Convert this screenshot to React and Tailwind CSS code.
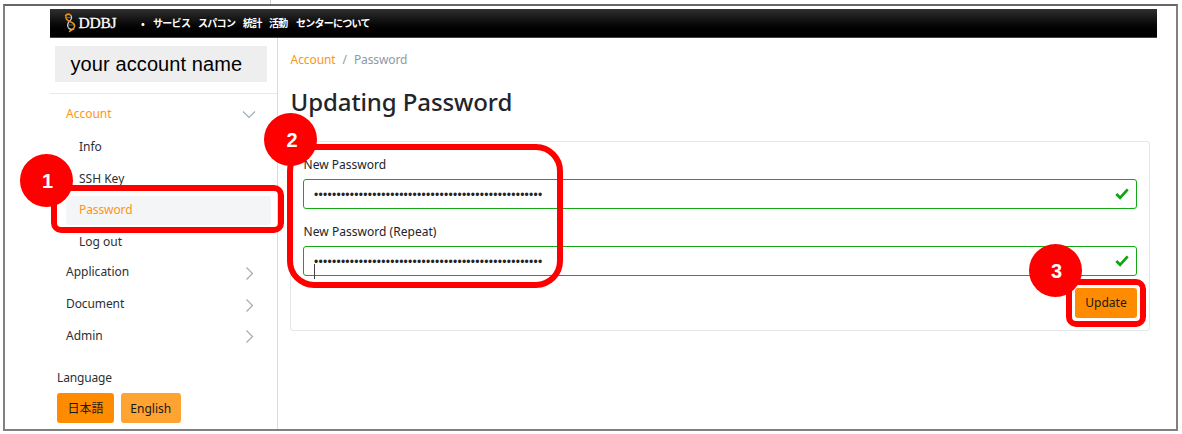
import React from "react";

function Chevron({ down }) {
  return (
    <svg className="h-[14px] w-[14px] shrink-0" viewBox="0 0 14 14" fill="none" stroke="#a3abb5" strokeWidth="1.2">
      <path d={down ? "M1 3.5 L7 9.5 L13 3.5" : "M4.5 0.5 L10.5 6.5 L4.5 12.5"} />
    </svg>
  );
}

function Group({ label, open, tracking }) {
  return (
    <div className="flex h-[31.6px] items-center justify-between pr-[21px] pl-4">
      <span className={`${open ? "text-[#ff9317]" : "text-[#2b3035]"} ${tracking}`}>{label}</span>
      <span className="flex pt-[3px]"><Chevron down={open} /></span>
    </div>
  );
}

function Item({ label, active, tracking }) {
  return (
    <div className="flex h-[31.6px] items-center pr-[6px] pl-4">
      <div className={`flex h-[29px] w-full items-center rounded-[3px] pl-[13px] ${active ? "bg-[#f4f5f7] text-[#ff9317]" : "text-[#2b3035]"}`}>
        <span className={tracking}>{label}</span>
      </div>
    </div>
  );
}

function Field({ label, caret, tracking }) {
  return (
    <div>
      <div className={`h-[18px] pl-[0.6px] leading-[18px] text-[#212529] ${tracking}`}>{label}</div>
      <div className="relative mt-[5px] flex h-[30px] items-center justify-between rounded-[3px] border border-[#14a914] pr-[7px] pl-[10px]">
        <span className="pt-px font-['Liberation_Sans',sans-serif] text-[12px] leading-none tracking-[0.28px] text-[#212529]">{"•".repeat(51)}</span>
        <svg className="h-[14px] w-[14px]" viewBox="0 0 14 14" fill="none" stroke="#0ba60b" strokeWidth="2.7">
          <path d="M1.3 7 L5.1 10.8 L12.7 2.4" />
        </svg>
        {caret && <span className="absolute top-[17px] left-[10px] h-[15px] w-px bg-[#444]" />}
      </div>
    </div>
  );
}

function Badge({ n, place }) {
  return (
    <div className={`absolute flex h-[53px] w-[53px] items-center justify-center rounded-full bg-[#ff0000] pt-px pl-[3px] font-['Liberation_Sans',sans-serif] text-[20px] leading-none font-bold text-white ${place}`}>
      {n}
    </div>
  );
}

export default function App() {
  return (
    <div className="relative h-[434px] w-[1182px] overflow-hidden bg-white pt-1 pl-[3px] font-['Noto_Sans','Noto_Sans_CJK_JP',sans-serif] text-[12px] whitespace-nowrap">
      <div className="absolute top-0 left-[270px] h-1 w-px bg-[#ccc]" />
      <div className="h-[427px] w-[1175px] border-2 border-[#808080] border-t-[#666] pt-[3px] pl-[45px]">
        <header className="flex h-[29px] w-[1107px] items-center border-b border-[#444] bg-linear-to-b from-[#303030] to-black text-white">
          <svg className="ml-[14px] h-[20px] w-[13px]" viewBox="0 0 13 20" fill="none">
            <path d="M1.2 3 C3 0.8 5 0.8 6.5 2" stroke="#e99117" strokeWidth="1.5" />
            <path d="M6.5 2 C8.5 4 7.5 6.3 5.8 8 C3.6 10 3.2 12.5 4.3 14.5" stroke="#c9c9c9" strokeWidth="1.3" />
            <path d="M4.3 14.5 C5.5 16.6 8 16.8 10 15.6" stroke="#dddddd" strokeWidth="1.4" />
            <path d="M2 3.2 C1.4 6 3.5 7.8 6.3 8.8" stroke="#e99117" strokeWidth="1.5" />
            <path d="M6.3 8.8 C10 10 11.4 12 10.2 14.5 C9.2 16.6 7.5 17.6 5 18.8" stroke="#e99117" strokeWidth="1.7" />
            <path d="M3 4.6 H7.3 M4.4 12 H9.8" stroke="#aaa" strokeWidth="0.6" />
          </svg>
          <span className="ml-[1.5px] w-[39.5px] font-['Liberation_Serif',serif] text-[15.5px] leading-none tracking-[-0.25px] [-webkit-text-stroke:0.3px_white]">DDBJ</span>
          <nav className="ml-[23px] flex items-center gap-[8px] font-['Noto_Sans_CJK_JP',sans-serif] text-[10px] leading-none font-bold">
            <span className="mr-[-1px] w-[5px]">•</span>
            <span className="w-[37px] tracking-[-0.7px]">サービス</span>
            <span className="w-[37px] tracking-[-0.7px]">スパコン</span>
            <span className="w-[18px] tracking-[-0.7px]">統計</span>
            <span className="w-[19px] tracking-[-0.7px]">活動</span>
            <span className="tracking-[-0.75px]">センターについて</span>
          </nav>
        </header>
        <div className="flex h-[391px]">
          <aside className="w-[228px] shrink-0 border-r border-[#d8dbde]">
            <div className="mt-2 ml-[5px] flex h-[36px] w-[212px] items-center bg-[#eeeeee] pl-[15.5px] font-['Liberation_Sans',sans-serif] text-[20px] leading-none tracking-[0.1px] text-black">
              your account name
            </div>
            <div className="mt-[11px] border-t border-[#e8e8e8]" />
            <div className="pt-[4px]">
              <Group label="Account" open tracking="tracking-normal" />
              <div className="pt-[1.7px]">
                <Item label="Info" tracking="tracking-normal" />
                <Item label="SSH Key" tracking="tracking-normal" />
                <Item label="Password" active tracking="tracking-[-0.1px]" />
                <Item label="Log out" tracking="tracking-normal" />
              </div>
              <div className="mt-[-1px]">
                <Group label="Application" tracking="tracking-normal" />
                <Group label="Document" tracking="tracking-[-0.1px]" />
                <Group label="Admin" tracking="tracking-normal" />
              </div>
            </div>
            <div className="mt-[18px] ml-[7px] h-[18px] leading-[18px] tracking-[-0.15px] text-[#2b3035]">Language</div>
            <div className="mt-[6px] ml-[7px] flex gap-[6.5px] text-[#181818]">
              <button className="h-[30px] w-[57px] rounded-[3px] bg-[#ff8c00] pt-px">日本語</button>
              <button className="h-[30px] w-[60.5px] rounded-[3px] bg-[#ffa333] pt-px">English</button>
            </div>
          </aside>
          <main className="pt-[13px] pl-[12px]">
            <div className="flex h-[18px] items-center gap-[7px] pl-[0.6px] tracking-[-0.1px] text-[#8f99a3]">
              <span className="text-[#ff9317]">Account</span>
              <span>/</span>
              <span>Password</span>
            </div>
            <h1 className="mt-[15px] h-[36px] pl-[0.6px] text-[24px] leading-[36px] font-medium tracking-[-0.1px] text-[#212529]">Updating Password</h1>
            <section className="mt-[21px] h-[190px] w-[860px] rounded-[3px] border border-[#e4e6e8] px-[12px] pt-[14px]">
              <Field label="New Password" tracking="tracking-normal" />
              <div className="h-[14px]" />
              <Field label="New Password (Repeat)" caret tracking="tracking-[0.03px]" />
              <div className="mt-[12px] flex justify-end">
                <button className="h-[30px] w-[62px] rounded-[3px] bg-[#ff8c00] text-[#181818]">Update</button>
              </div>
            </section>
          </main>
        </div>
      </div>
      <div className="absolute top-[185px] left-[51px] h-[48px] w-[233px] rounded-[10px] border-[6px] border-[#ff0000]" />
      <Badge n="1" place="top-[154px] left-[19.5px]" />
      <div className="absolute top-[144px] left-[287px] h-[144px] w-[276px] rounded-[27px] border-[6px] border-[#ff0000]" />
      <Badge n="2" place="top-[113px] left-[264px]" />
      <div className="absolute top-[279px] left-[1066px] h-[48px] w-[80px] rounded-[10px] border-[6px] border-[#ff0000]" />
      <Badge n="3" place="top-[244px] left-[1028.5px]" />
    </div>
  );
}
